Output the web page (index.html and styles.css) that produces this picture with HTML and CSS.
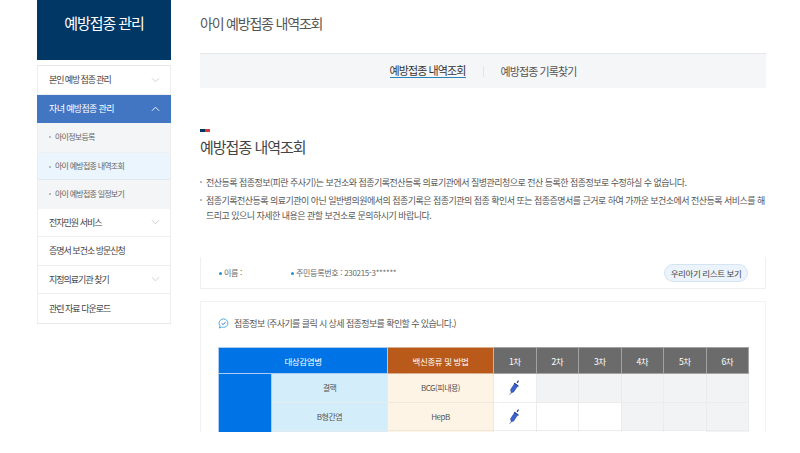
FILE: index.html
```html
<!DOCTYPE html>
<html lang="ko">
<head>
<meta charset="utf-8">
<title>아이 예방접종 내역조회</title>
<link rel="stylesheet" href="styles.css">
</head>
<body>
<div class="page">
  <aside class="side">
    <div class="side-title">예방접종 관리</div>
    <ul class="menu">
      <li class="item tight"><span>본인 예방 접종 관리</span><svg class="chev" viewBox="0 0 10 6"><path d="M1 1l4 4 4-4"/></svg></li>
      <li class="item active"><span>자녀 예방접종 관리</span><svg class="chev" viewBox="0 0 10 6"><path d="M1 5l4-4 4 4"/></svg></li>
      <li class="sub">아이정보등록</li>
      <li class="sub current">아이 예방접종 내역조회</li>
      <li class="sub">아이 예방접종 일정보기</li>
      <li class="item"><span>전자민원 서비스</span><svg class="chev" viewBox="0 0 10 6"><path d="M1 1l4 4 4-4"/></svg></li>
      <li class="item"><span>증명서 보건소 방문신청</span></li>
      <li class="item"><span>지정의료기관 찾기</span><svg class="chev" viewBox="0 0 10 6"><path d="M1 1l4 4 4-4"/></svg></li>
      <li class="item last"><span>관련 자료 다운로드</span></li>
    </ul>
  </aside>
  <main class="main">
    <h1 class="page-title">아이 예방접종 내역조회</h1>
    <nav class="tabs">
      <a class="tab on">예방접종 내역조회</a>
      <i class="tab-sep"></i>
      <a class="tab">예방접종 기록찾기</a>
    </nav>
    <div class="flag"><i></i><i></i></div>
    <h2 class="section-title">예방접종 내역조회</h2>
    <ul class="notes">
      <li>전산등록 접종정보(피란 주사기)는 보건소와 접종기록전산등록 의료기관에서 질병관리청으로 전산 등록한 접종정보로 수정하실 수 없습니다.</li>
      <li>접종기록전산등록 의료기관이 아닌 일반병의원에서의 접종기록은 접종기관의 접종 확인서 또는 접종증명서를 근거로 하여 가까운 보건소에서 전산등록 서비스를 해드리고 있으니 자세한 내용은 관할 보건소로 문의하시기 바랍니다.</li>
    </ul>
    <div class="child">
      <span class="child-name">이름 :</span>
      <span class="child-id">주민등록번호 : 230215-3******</span>
      <button class="child-btn">우리아기 리스트 보기</button>
    </div>
    <section class="panel">
      <p class="panel-head">
        <svg class="chat" viewBox="0 0 12 12"><path class="chat-o" d="M6 1a4.800 4.600 0 0 1 0 9.200c-.8 0-1.500-.1-2.100-.4L1.600 11l.5-2.500A4.700 4.700 0 0 1 6 1z"/><path class="chat-c" d="M4 5.800l1.500 1.400L8.300 4.500"/></svg>
        접종정보 (주사기를 클릭 시 상세 접종정보를 확인할 수 있습니다.)
      </p>
      <table class="vac">
        <colgroup><col class="c1"><col class="c2"><col class="c3"><col class="cn"><col class="cn"><col class="cn"><col class="cn"><col class="cn"><col class="cn"></colgroup>
        <thead>
          <tr><th colspan="2" class="h-blue">대상감염병</th><th class="h-brown">백신종류 및 방법</th><th>1차</th><th>2차</th><th>3차</th><th>4차</th><th>5차</th><th>6차</th></tr>
        </thead>
        <tbody>
          <tr>
            <td rowspan="3" class="d-blue"></td><td class="d-sky">결핵</td><td class="d-cream">BCG(피내용)</td>
            <td><svg class="syr" viewBox="0 0 11 15"><use href="#syringe"/></svg></td><td class="off"></td><td class="off"></td><td class="off"></td><td class="off"></td><td class="off"></td>
          </tr>
          <tr>
            <td class="d-sky">B형간염</td><td class="d-cream">HepB</td>
            <td><svg class="syr" viewBox="0 0 11 15"><use href="#syringe"/></svg></td><td></td><td></td><td class="off"></td><td class="off"></td><td class="off"></td>
          </tr>
          <tr>
            <td class="d-sky"></td><td class="d-cream"></td><td></td><td></td><td></td><td></td><td></td><td class="off"></td>
          </tr>
        </tbody>
      </table>
    </section>
  </main>
</div>
<svg class="defs" aria-hidden="true"><defs><g id="syringe">
  <path fill="#3a62d0" stroke="#24408f" stroke-width=".5" d="M1.600 9.600L5.800 3.300l3.200 2.300-4.300 6.300-2.500 1z"/>
  <path fill="#24408f" d="M5.300 2.700l4.600 3.300-.6.800-4.600-3.300zM7.500 2.600L9 .3l1 .7-1.400 2.300z"/>
  <path stroke="#7a8498" stroke-width=".8" fill="none" d="M2.200 12.800L.6 15"/>
</g></defs></svg>
</body>
</html>
```
FILE: styles.css
```css
* { box-sizing: border-box; }
html, body { margin: 0; padding: 0; background: #fff; }
body { font-family: "Noto Sans CJK KR", "Noto Sans", sans-serif; color: #444; font-weight: 400; }
ul { list-style: none; margin: 0; padding: 0; }
h1, h2, p { margin: 0; font-weight: 400; }
.page { display: flex; height: 432px; overflow: hidden; padding-left: 37px; gap: 29px; }
.defs { display: block; width: 0; height: 0; }

.side { width: 134px; flex: none; }
.side-title { height: 60px; background: #003764; color: #fff; font-size: 15px; letter-spacing: -1.1px; text-align: center; line-height: 46px; }
.menu { margin-top: 5px; border: 1px solid #e8e8e8; border-right-color: #eee; border-left-color: #eee; }
.item { height: 28.500px; display: flex; align-items: center; justify-content: space-between; padding: 0 10px 0 11px; font-size: 9px; letter-spacing: -1px; color: #444; border-bottom: 1px solid #eee; }
.item.tight { letter-spacing: -1.1px; }
.item.last { border-bottom: 0; }
.item.active { background: #4276c2; color: #fff; border-bottom: 0; margin: 0 -1px; padding: 0 11px 0 12px; letter-spacing: -.65px; }
.chev { width: 9px; height: 6px; fill: none; stroke: #ccc; stroke-width: 1; }
.active .chev { stroke: #fff; }
.sub { height: 28.500px; line-height: 28px; background: #f4f5f7; font-size: 8px; letter-spacing: -.75px; color: #666; padding-left: 17px; position: relative; }
.sub::before { content: ""; position: absolute; left: 11px; top: 13px; width: 2px; height: 2px; background: #aaa; border-radius: 50%; }
.sub.current { background: #ebf5fd; border-top: 1px solid #eef0f2; border-bottom: 1px solid #e3eaf0; line-height: 26px; }

.main { width: 566px; flex: none; }
.page-title { font-size: 14px; letter-spacing: -1.2px; color: #555; line-height: 20px; padding-top: 13px; height: 53px; }
.tabs { height: 35px; background: #f5f6f8; border-top: 1px solid #e4e6ea; display: flex; align-items: center; justify-content: center; gap: 17px; font-size: 11px; letter-spacing: -.9px; color: #555; }
.tab { line-height: 12px; padding-bottom: 1px; }
.tab.on { color: #333; border-bottom: 1px solid #2a82b8; }
.tab-sep { width: 1px; height: 11px; background: #e2e4e8; }
.flag { display: flex; margin-top: 41px; height: 3px; width: 10px; }
.flag i { flex: 1; background: #003764; }
.flag i + i { background: #d93a3a; }
.section-title { font-size: 15px; letter-spacing: -1px; color: #444; line-height: 22px; margin-top: 4px; height: 22px; }
.notes { margin-top: 17px; font-size: 9px; letter-spacing: -.53px; color: #555; line-height: 15px; }
.notes li { padding-left: 6px; position: relative; margin-bottom: 3px; }
.notes li::before { content: ""; position: absolute; left: 0; top: 6px; width: 2px; height: 2px; background: #bbb; }
.child { margin-top: 34px; height: 32px; border: 1px solid #f0f0f0; border-top: 0; display: flex; align-items: center; font-size: 8px; letter-spacing: -.3px; color: #666; padding: 0 17px 0 18px; }
.child-name, .child-id { position: relative; padding-left: 5px; }
.child-name { width: 72px; }
.child-name::before, .child-id::before { content: ""; position: absolute; left: 0; top: 5px; width: 3px; height: 3px; border-radius: 50%; background: #2a8fd0; }
.child-btn { margin-left: auto; height: 18px; width: 84px; padding: 0; font: inherit; font-size: 8.500px; color: #444; background: #ebf4fc; border: 1px solid #d5e4f2; border-radius: 9px; letter-spacing: -.4px; }
.panel { margin-top: 12px; border: 1px solid #f2f2f2; padding: 12px 17px 0; height: 200px; }
.panel-head { display: flex; align-items: center; gap: 5px; height: 18px; font-size: 9px; letter-spacing: -.6px; color: #555; }
.chat { width: 11px; height: 11px; }
.chat-o { fill: none; stroke: #3ca6d8; stroke-width: 1; }
.chat-c { fill: none; stroke: #2266cc; stroke-width: 1; }
.vac { margin-top: 15px; width: 530px; border-collapse: collapse; table-layout: fixed; font-size: 8px; letter-spacing: -.5px; color: #555; }
.c1 { width: 53px; } .c2 { width: 116px; } .c3 { width: 106px; } .cn { width: 42.500px; }
.vac th { height: 26px; background: #6b6b6b; color: #fff; font-weight: 400; border: 1px solid #a3a3a3; font-size: 8.500px; padding: 0; letter-spacing: -.4px; }
.vac th.h-blue { background: #0073e6; border-color: #a9cdf0; }
.vac th.h-brown { background: #b95a1a; border-color: #d9b08f; }
.vac td { height: 28.500px; padding: 0; text-align: center; border: 1px solid #ececec; background: #fff; vertical-align: middle; }
.vac td.d-blue { background: #0073e6; border-color: #a9cdf0; }
.vac td.d-sky { background: #d4edfb; border-color: #e3ecef; }
.vac td.d-cream { background: #fef4e5; border-color: #efe9dd; }
.vac td.off { background: #f2f3f5; }
.syr { width: 11px; height: 15px; display: block; margin: 0 auto; }
```
